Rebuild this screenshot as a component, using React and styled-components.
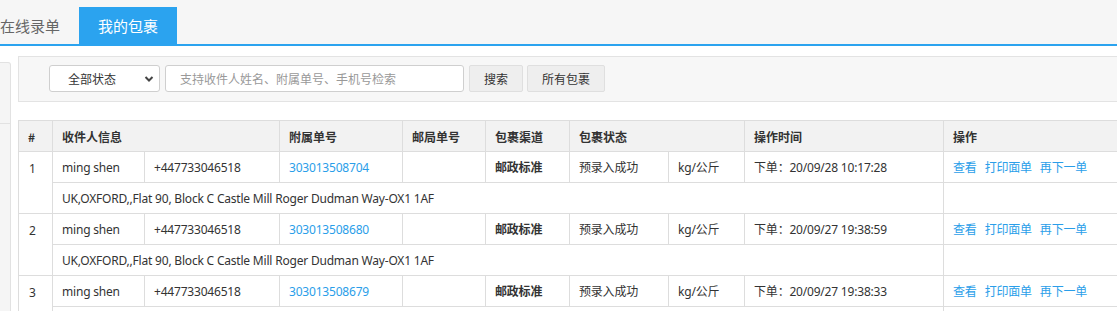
import React from "react";
import styled, { createGlobalStyle } from "styled-components";

const Global = createGlobalStyle`
  html, body { margin: 0; padding: 0; background: #fff; overflow: hidden; }
  body { font-family: "Noto Sans", "Noto Sans CJK SC", sans-serif; font-size: 12px; color: #333; }
  * { box-sizing: border-box; }
`;

const Page = styled.div`
  width: 1117px;
  height: 311px;
  overflow: hidden;
`;

const TabBar = styled.div`
  height: 46px;
  background: #f6f6f6;
  border-bottom: 2px solid #2ba3ef;
  display: flex;
  align-items: flex-end;
`;

const TabList = styled.div`
  display: flex;
  margin-left: -19px;
`;

const Tab = styled.div`
  height: 37px;
  padding: 0 19px;
  display: flex;
  align-items: center;
  font-size: 15px;
  font-family: "Noto Sans CJK SC", sans-serif;
  color: ${(p) => (p.$active ? "#fff" : "#666")};
  background: ${(p) => (p.$active ? "#2ba3ef" : "transparent")};
`;

const Body = styled.div`
  display: flex;
  gap: 7px;
`;

const Sidebar = styled.div`
  width: 11px;
  flex: none;
  margin-top: 16px;
  height: 260px;
  background: #f5f5f5;
  border: 1px solid #e2e2e2;
  border-left: none;
  border-top-right-radius: 3px;
`;

const SideItem = styled.div`
  height: 61px;
  border-bottom: 1px solid #e2e2e2;
`;

const Content = styled.div`
  width: 1130px;
  flex: none;
  padding-top: 10px;
`;

const SearchBox = styled.div`
  height: 46px;
  background: #f7f7f7;
  border: 1px solid #e3e3e3;
  display: flex;
  align-items: center;
  padding: 0 0 1px 30px;
`;

const SelectBox = styled.div`
  position: relative;
  width: 111px;
  height: 27px;
  background: #fff;
  border: 1px solid #cfcfcf;
  border-radius: 3px;
  display: flex;
  align-items: center;
  padding-left: 18px;
  font-family: "Noto Sans CJK SC", sans-serif;
  font-size: 12px;
  color: #333;
`;

const Chevron = styled.svg`
  position: absolute;
  right: 5px;
  top: 9px;
`;

const Input = styled.div`
  margin-left: 5px;
  width: 299px;
  height: 27px;
  background: #fff;
  border: 1px solid #cfcfcf;
  border-radius: 3px;
  display: flex;
  align-items: center;
  padding-left: 14px;
  font-family: "Noto Sans CJK SC", sans-serif;
  font-size: 12px;
  color: #999;
`;

const Button = styled.div`
  margin-left: ${(p) => p.$gap}px;
  width: ${(p) => p.$w}px;
  height: 27px;
  background: #eeeeee;
  border: 1px solid #dfdfdf;
  border-radius: 2px;
  display: flex;
  align-items: center;
  justify-content: center;
  font-family: "Noto Sans CJK SC", sans-serif;
  font-size: 12px;
  color: #333;
`;

const Table = styled.table`
  margin-top: 18px;
  border-collapse: collapse;
  table-layout: fixed;
  width: 1130px;
  border: 1px solid #dddddd;
`;

const Th = styled.th`
  height: 31px;
  padding: 0 9px;
  background: #f2f2f2;
  border: 1px solid #dddddd;
  text-align: left;
  font-weight: bold;
  font-family: "Noto Sans CJK SC", sans-serif;
  font-size: 12px;
  color: #333;
  white-space: nowrap;
`;

const Td = styled.td`
  height: 31px;
  padding: 0 9px;
  border: 1px solid #dddddd;
  vertical-align: middle;
  font-family: "Noto Sans", "Noto Sans CJK SC", sans-serif;
  font-size: 12px;
  letter-spacing: -0.2px;
  color: #333;
  white-space: nowrap;
  font-weight: ${(p) => (p.$bold ? "bold" : "normal")};
`;

const IdxTd = styled(Td)`
  vertical-align: top;
  padding-top: 8px;
  padding-left: 10px;
`;

const Link = styled.a`
  color: #2a9ee9;
  text-decoration: none;
  margin-right: ${(p) => (p.$last ? 0 : 8)}px;
  font-family: "Noto Sans", "Noto Sans CJK SC", sans-serif;
`;

const rows = [
  { id: 1, no: "303013508704", time: "20/09/28 10:17:28" },
  { id: 2, no: "303013508680", time: "20/09/27 19:38:59" },
  { id: 3, no: "303013508679", time: "20/09/27 19:38:33" },
];

const widths = [34, 92, 135, 123, 83, 84, 99, 76, 199, 205];

export default function App() {
  return (
    <Page>
      <Global />
      <TabBar>
        <TabList>
          <Tab>在线录单</Tab>
          <Tab $active>我的包裹</Tab>
        </TabList>
      </TabBar>
      <Body>
        <Sidebar>
          <SideItem />
        </Sidebar>
        <Content>
          <SearchBox>
            <SelectBox>
              全部状态
              <Chevron width="10" height="8" viewBox="0 0 10 8">
                <path d="M1.5 2 L5 5.5 L8.5 2" fill="none" stroke="#444" strokeWidth="2" />
              </Chevron>
            </SelectBox>
            <Input>支持收件人姓名、附属单号、手机号检索</Input>
            <Button $gap={5} $w={54}>搜索</Button>
            <Button $gap={4} $w={78}>所有包裹</Button>
          </SearchBox>
          <Table>
            <colgroup>
              {widths.map((w, i) => (
                <col key={i} style={{ width: w }} />
              ))}
            </colgroup>
            <thead>
              <tr>
                <Th>#</Th>
                <Th colSpan={2}>收件人信息</Th>
                <Th>附属单号</Th>
                <Th>邮局单号</Th>
                <Th>包裹渠道</Th>
                <Th colSpan={2}>包裹状态</Th>
                <Th>操作时间</Th>
                <Th>操作</Th>
              </tr>
            </thead>
            <tbody>
              {rows.map((r) => (
                <React.Fragment key={r.id}>
                  <tr>
                    <IdxTd rowSpan={2}>{r.id}</IdxTd>
                    <Td>ming shen</Td>
                    <Td>+447733046518</Td>
                    <Td>
                      <Link $last>{r.no}</Link>
                    </Td>
                    <Td />
                    <Td $bold>邮政标准</Td>
                    <Td>预录入成功</Td>
                    <Td>kg/公斤</Td>
                    <Td>下单：{r.time}</Td>
                    <Td>
                      <Link>查看</Link>
                      <Link>打印面单</Link>
                      <Link $last>再下一单</Link>
                    </Td>
                  </tr>
                  <tr>
                    <Td colSpan={8}>UK,OXFORD,,Flat 90, Block C Castle Mill Roger Dudman Way-OX1 1AF</Td>
                    <Td />
                  </tr>
                </React.Fragment>
              ))}
            </tbody>
          </Table>
        </Content>
      </Body>
    </Page>
  );
}
